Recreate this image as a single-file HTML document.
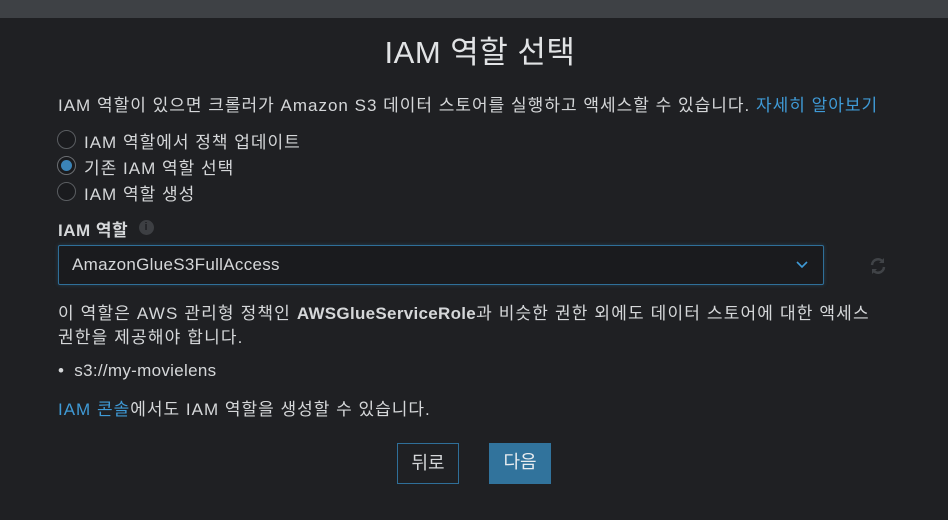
<!DOCTYPE html>
<html><head><meta charset="utf-8"><style>
body{margin:0;width:948px;height:520px;background:#1f2023;color:#d5d7d9;font-family:"Liberation Sans","Noto Sans CJK KR",sans-serif;font-size:17px;letter-spacing:1px;overflow:hidden;position:relative}
.top{position:absolute;left:0;top:0;width:948px;height:18px;background:#3e4145}
.a{position:absolute;white-space:nowrap}
a{color:#3f9ad6;text-decoration:none}
.r{position:absolute;left:57px;width:19px;height:19px;border:1px solid #5a5d61;border-radius:50%;box-sizing:border-box;background:#1a1b1e}
.sel{position:absolute;left:58px;top:245px;width:766px;height:40px;box-sizing:border-box;border:1px solid #2f6f99;background:#1a1b1e;border-radius:2px;box-shadow:0 0 4px rgba(47,111,153,.4)}
.btn{position:absolute;top:443px;height:41px;box-sizing:border-box;font-size:18px;text-align:center;line-height:38px;letter-spacing:0}
</style></head><body>
<div class="top"></div>
<div class="a" style="left:6px;width:948px;text-align:center;top:27px;font-size:31px;letter-spacing:0.5px;color:#e1e3e5">IAM 역할 선택</div>
<div class="a" style="left:58px;top:91px">IAM 역할이 있으면 크롤러가 Amazon S3 데이터 스토어를 실행하고 액세스할 수 있습니다. <a>자세히 알아보기</a></div>
<div class="r" style="top:130px"></div><div class="a" style="left:84px;top:128px">IAM 역할에서 정책 업데이트</div>
<div class="r" style="top:156px;border-color:#6a6d71"><div style="position:absolute;left:3px;top:3px;width:11px;height:11px;border-radius:50%;background:#3b84b8"></div></div><div class="a" style="left:84px;top:154px">기존 IAM 역할 선택</div>
<div class="r" style="top:182px"></div><div class="a" style="left:84px;top:180px">IAM 역할 생성</div>
<div class="a" style="left:58px;top:216px;font-weight:bold;letter-spacing:0.5px">IAM 역할</div>
<div class="a" style="left:139px;top:220px;width:15px;height:15px;border-radius:50%;background:#3d3f43;color:#1f2023;font-size:11px;font-weight:bold;text-align:center;line-height:15px">i</div>
<div class="sel"><div class="a" style="left:13px;top:9px;letter-spacing:0.3px">AmazonGlueS3FullAccess</div>
<svg class="a" style="left:737px;top:15px" width="12" height="8"><path d="M1 1l5 5 5-5" stroke="#3f9ad6" stroke-width="1.6" fill="none"/></svg></div>
<svg class="a" style="left:869px;top:257px" width="18" height="18" viewBox="0 0 18 18"><path d="M3 8a6 6 0 0 1 11-3M15 10a6 6 0 0 1-11 3" stroke="#404347" stroke-width="2.5" fill="none"/><path d="M15 1v5h-5zM3 17v-5h5z" fill="#404347"/></svg>
<div class="a" style="left:58px;top:302px;line-height:24px;letter-spacing:1.15px">이 역할은 AWS 관리형 정책인 <b style="letter-spacing:0.3px">AWSGlueServiceRole</b>과 비슷한 권한 외에도 데이터 스토어에 대한 액세스<br>권한을 제공해야 합니다.</div>
<div class="a" style="left:58px;top:361px;letter-spacing:0.3px">•&nbsp; s3://my-movielens</div>
<div class="a" style="left:58px;top:395px"><a>IAM 콘솔</a>에서도 IAM 역할을 생성할 수 있습니다.</div>
<div class="btn" style="left:397px;width:62px;border:1px solid #2f6f99;color:#d5d7d9">뒤로</div>
<div class="btn" style="left:489px;width:62px;background:#31739c;color:#e8ecef">다음</div>
</body></html>
